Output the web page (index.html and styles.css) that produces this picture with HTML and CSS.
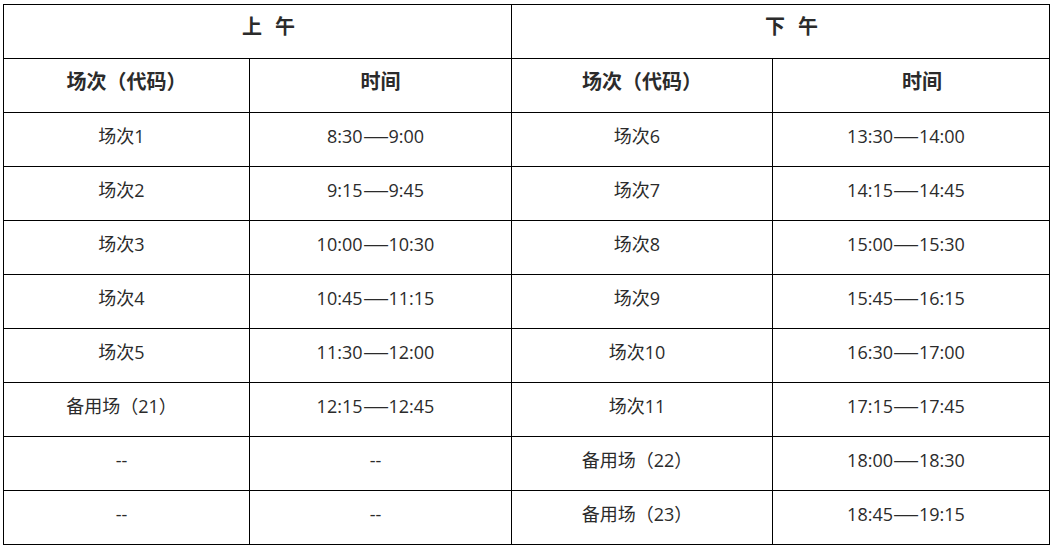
FILE: index.html
```html
<!DOCTYPE html>
<html lang="zh-CN">
<head>
<meta charset="utf-8">
<title>场次时间表</title>
<link rel="stylesheet" href="styles.css">
</head>
<body>
<table class="schedule">
  <colgroup>
    <col class="c1"><col class="c2"><col class="c3"><col class="c4">
  </colgroup>
  <tr class="period">
    <th colspan="2" class="half">上 午</th>
    <th colspan="2" class="half">下 午</th>
  </tr>
  <tr class="head">
    <th>场次（代码）</th><th>时间</th><th>场次（代码）</th><th class="shift">时间</th>
  </tr>
  <tr><td>场次1</td><td>8:30<span class="dash">—</span>9:00</td><td>场次6</td><td>13:30<span class="dash">—</span>14:00</td></tr>
  <tr><td>场次2</td><td>9:15<span class="dash">—</span>9:45</td><td>场次7</td><td>14:15<span class="dash">—</span>14:45</td></tr>
  <tr><td>场次3</td><td>10:00<span class="dash">—</span>10:30</td><td>场次8</td><td>15:00<span class="dash">—</span>15:30</td></tr>
  <tr><td>场次4</td><td>10:45<span class="dash">—</span>11:15</td><td>场次9</td><td>15:45<span class="dash">—</span>16:15</td></tr>
  <tr><td>场次5</td><td>11:30<span class="dash">—</span>12:00</td><td>场次10</td><td>16:30<span class="dash">—</span>17:00</td></tr>
  <tr><td>备用场（21）</td><td>12:15<span class="dash">—</span>12:45</td><td>场次11</td><td>17:15<span class="dash">—</span>17:45</td></tr>
  <tr><td>--</td><td>--</td><td>备用场（22）</td><td>18:00<span class="dash">—</span>18:30</td></tr>
  <tr><td>--</td><td>--</td><td>备用场（23）</td><td>18:45<span class="dash">—</span>19:15</td></tr>
</table>
</body>
</html>
```

FILE: styles.css
```css
html, body {
  margin: 0;
  padding: 0;
  background: #ffffff;
}
body {
  padding: 4px 0 0 3px;
  font-family: "Open Sans", "Noto Sans CJK SC", sans-serif;
  color: #2b2b2b;
}
.schedule {
  border-collapse: collapse;
  table-layout: fixed;
  width: 1046px;
}
.c1 { width: 246px; }
.c2 { width: 262px; }
.c3 { width: 261px; }
.c4 { width: 277px; }
.schedule th,
.schedule td {
  border: 1px solid #000000;
  height: 54px;
  box-sizing: border-box;
  padding: 0 10px 7px 0;
  text-align: center;
  vertical-align: middle;
  font-size: 18px;
  line-height: 24px;
  font-weight: normal;
}
.schedule th {
  font-weight: bold;
  font-size: 20px;
}
.schedule .head th {
  padding: 0 0 7px 0;
}
.schedule .head th.shift {
  padding-left: 22px;
}
.schedule .period th {
  padding: 0 0 9px 22px;
  word-spacing: 8px;
}
.dash {
  display: inline-block;
  margin: 0 4px;
  transform: scaleX(1.45);
}
```
